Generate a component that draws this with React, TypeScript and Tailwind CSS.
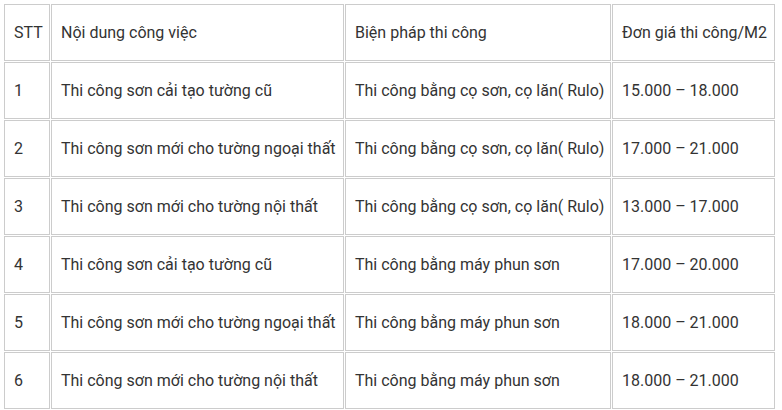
const HEAD = ["STT", "Nội dung công việc", "Biện pháp thi công", "Đơn giá thi công/M2"];

const ROWS: string[][] = [
  ["1", "Thi công sơn cải tạo tường cũ", "Thi công bằng cọ sơn, cọ lăn( Rulo)", "15.000 – 18.000"],
  ["2", "Thi công sơn mới cho tường ngoại thất", "Thi công bằng cọ sơn, cọ lăn( Rulo)", "17.000 – 21.000"],
  ["3", "Thi công sơn mới cho tường nội thất", "Thi công bằng cọ sơn, cọ lăn( Rulo)", "13.000 – 17.000"],
  ["4", "Thi công sơn cải tạo tường cũ", "Thi công bằng máy phun sơn", "17.000 – 20.000"],
  ["5", "Thi công sơn mới cho tường ngoại thất", "Thi công bằng máy phun sơn", "18.000 – 21.000"],
  ["6", "Thi công sơn mới cho tường nội thất", "Thi công bằng máy phun sơn", "18.000 – 21.000"],
];

function Cell({ children }: { children: React.ReactNode }) {
  return (
    <div className="flex h-[57px] items-center whitespace-nowrap border border-[#cccccc] px-[9px]">
      {children}
    </div>
  );
}

export default function App() {
  return (
    <div
      className="h-[410px] w-[782px] overflow-hidden bg-white text-[16px] text-[#333333]"
      style={{ fontFamily: "Roboto, 'Noto Sans', sans-serif" }}
    >
      <div className="ml-[3px] mt-[3px] grid w-max grid-cols-[46px_293px_266px_163px] gap-px p-px">
        {HEAD.map((h) => (
          <Cell key={h}>{h}</Cell>
        ))}
        {ROWS.map((row) =>
          row.map((c, i) => <Cell key={row[0] + "-" + i}>{c}</Cell>),
        )}
      </div>
    </div>
  );
}
